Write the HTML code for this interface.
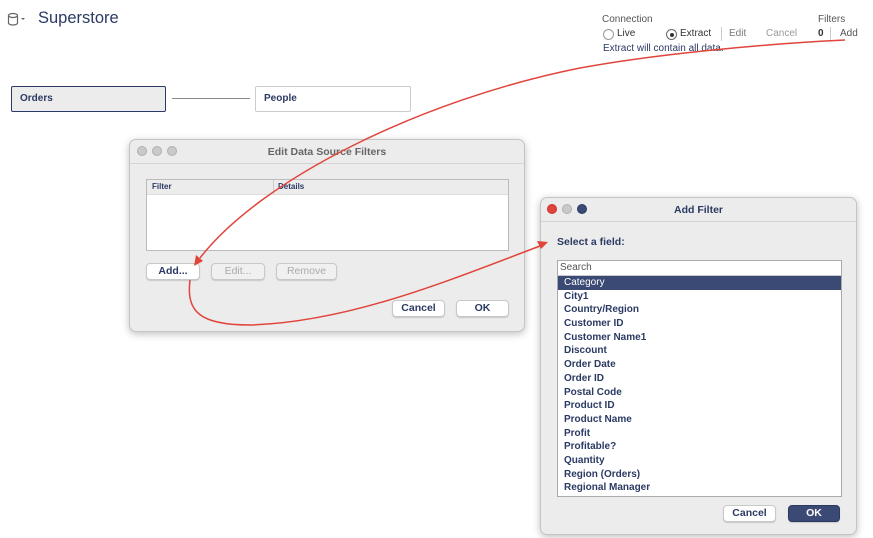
<!DOCTYPE html>
<html><head><style>
body{margin:0;width:873px;height:538px;background:#fff;position:relative;overflow:hidden;font-family:"Liberation Sans",sans-serif;color:#2b3a63}
.a{position:absolute}
.t{font-size:10px;font-weight:bold;color:#2b3a63}
.btn{position:absolute;background:#fff;border:1px solid #c8c8c8;border-radius:4px;font-size:10.5px;font-weight:bold;text-align:center;line-height:15px;color:#2b3a63;box-shadow:0 1px 1px rgba(0,0,0,.15)}
.dis{background:#f0f0f0;color:#aaa;font-weight:normal}
.dlg{position:absolute;background:#ececec;border:1px solid #c4c4c4;border-radius:7px;box-shadow:0 2px 8px rgba(0,0,0,.25)}
.tb{height:23px;border-bottom:1px solid #d4d4d4;font-size:10.5px;font-weight:bold;color:#666;text-align:center;line-height:24px;position:relative}
.dot{position:absolute;top:6px;width:10px;height:10px;border-radius:50%;background:#c9c9c9;border:1px solid #b0b0b0;box-sizing:border-box}
.row{height:13.7px;line-height:13.7px;font-size:10px;font-weight:bold;padding-left:6px;color:#2b3a63;white-space:nowrap}
</style></head><body>
<svg class="a" style="left:7px;top:12px" width="22" height="14"><ellipse cx="6" cy="3.5" rx="4.5" ry="2" fill="none" stroke="#666" stroke-width="1.2"/><path d="M1.5 3.5V11a4.5 2 0 0 0 9 0V3.5" fill="none" stroke="#666" stroke-width="1.2"/><path d="M14 6l2 2 2-2z" fill="#666"/></svg>
<div class="a" style="left:38px;top:9px;font-size:16.5px;color:#2b3a63">Superstore</div>

<div class="a" style="left:602px;top:14px;font-size:10px;color:#555">Connection</div>
<div class="a" style="left:818px;top:14px;font-size:10px;color:#555">Filters</div>
<div class="a" style="left:603px;top:29px;width:9px;height:9px;border:1px solid #999;border-radius:50%"></div>
<div class="a" style="left:617px;top:28px;font-size:10px;color:#333">Live</div>
<div class="a" style="left:666px;top:29px;width:9px;height:9px;border:1px solid #666;border-radius:50%"><div style="margin:2.5px;width:4px;height:4px;border-radius:50%;background:#333"></div></div>
<div class="a" style="left:680px;top:28px;font-size:10px;color:#333">Extract</div>
<div class="a" style="left:721px;top:27px;width:1px;height:14px;background:#ccc"></div>
<div class="a" style="left:729px;top:28px;font-size:10px;color:#777">Edit</div>
<div class="a" style="left:766px;top:28px;font-size:10px;color:#999">Cancel</div>
<div class="a" style="left:818px;top:28px;font-size:10px;font-weight:bold;color:#333">0</div>
<div class="a" style="left:830px;top:27px;width:1px;height:14px;background:#ccc"></div>
<div class="a" style="left:840px;top:28px;font-size:10px;color:#555">Add</div>
<div class="a" style="left:603px;top:43px;font-size:10px;color:#2b3a63">Extract will contain all data.</div>

<div class="a t" style="left:11px;top:86px;height:24px;border:1px solid #2b3a63;background:#ececec;border-radius:2px;line-height:24px;padding-left:8px;width:145px">Orders</div>
<div class="a" style="left:172px;top:98px;width:78px;height:1px;background:#888"></div>
<div class="a t" style="left:255px;top:86px;width:146px;height:24px;border:1px solid #ccc;background:#fff;border-radius:2px;line-height:24px;padding-left:8px">People</div>

<div class="dlg" style="left:129px;top:139px;width:394px;height:191px">
 <div class="tb">Edit Data Source Filters<div class="dot" style="left:7px"></div><div class="dot" style="left:22px"></div><div class="dot" style="left:37px"></div></div>
 <div class="a" style="left:16px;top:39px;width:361px;height:70px;background:#fff;border:1px solid #bbb">
  <div style="height:14px;background:#ececec;border-bottom:1px solid #ddd;font-size:8px;font-weight:bold;line-height:14px;position:relative"><span class="a" style="left:5px">Filter</span><span class="a" style="left:126px;border-left:1px solid #ccc;padding-left:4px;height:14px">Details</span></div>
 </div>
 <div class="btn" style="left:16px;top:123px;width:52px">Add...</div>
 <div class="btn dis" style="left:81px;top:123px;width:52px">Edit...</div>
 <div class="btn dis" style="left:146px;top:123px;width:59px">Remove</div>
 <div class="btn" style="left:262px;top:160px;width:51px">Cancel</div>
 <div class="btn" style="left:326px;top:160px;width:51px">OK</div>
</div>

<div class="dlg" style="left:540px;top:197px;width:315px;height:336px">
 <div class="tb" style="color:#2b3a63">Add Filter<div class="dot" style="left:6px;background:#e0443a;border-color:#c33"></div><div class="dot" style="left:21px"></div><div class="dot" style="left:36px;background:#3b4a75;border-color:#2b3a63"></div></div>
 <div class="a" style="left:16px;top:38px;font-size:10.5px;font-weight:bold;color:#2b3a63">Select a field:</div>
 <div class="a" style="left:16px;top:62px;width:283px;height:235px;background:#fff;border:1px solid #aaa;overflow:hidden">
  <div class="row" style="padding-left:2px;font-weight:normal;color:#555;border-bottom:1px solid #ccc;height:14px;line-height:14px">Search</div>
  <div class="row" style="background:#3b4a75;color:#fff;font-weight:normal">Category</div>
  <div class="row">City1</div><div class="row">Country/Region</div><div class="row">Customer ID</div><div class="row">Customer Name1</div><div class="row">Discount</div><div class="row">Order Date</div><div class="row">Order ID</div><div class="row">Postal Code</div><div class="row">Product ID</div><div class="row">Product Name</div><div class="row">Profit</div><div class="row">Profitable?</div><div class="row">Quantity</div><div class="row">Region (Orders)</div><div class="row">Regional Manager</div>
 </div>
 <div class="btn" style="left:182px;top:307px;width:51px">Cancel</div>
 <div class="btn" style="left:247px;top:307px;width:50px;background:#3b4a75;color:#fff;border-color:#2b3a63">OK</div>
</div>

<svg class="a" style="left:0;top:0" width="873" height="538">
<path d="M845 40 C 760 44, 650 55, 580 68 C 420 100, 260 180, 200 258" fill="none" stroke="#e0443a" stroke-width="1.5"/>
<path d="M194 266 l2-11 l7 6z" fill="#e0443a"/>
<path d="M190 280 C 186 312, 200 325, 250 325 C 350 322, 450 280, 540 246" fill="none" stroke="#e0443a" stroke-width="1.5"/>
<path d="M548 242 l-11 -1 l4 8z" fill="#e0443a"/>
</svg>
</body></html>
